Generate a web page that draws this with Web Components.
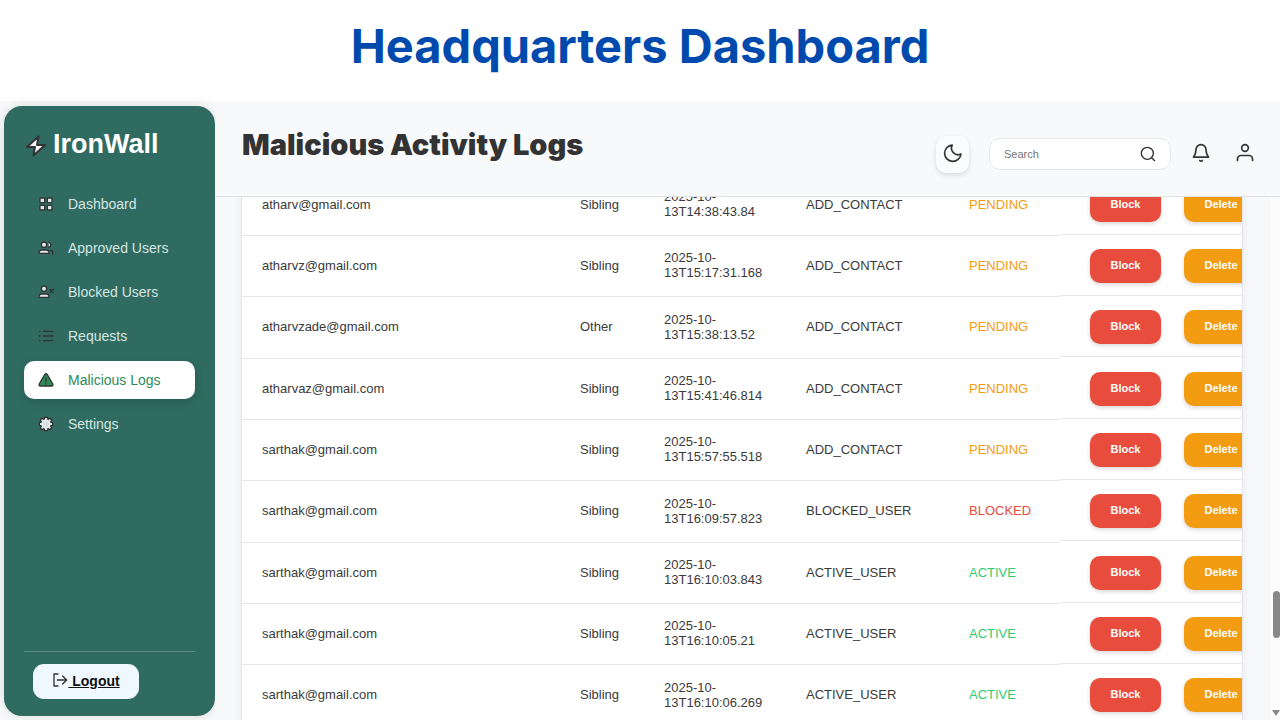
<!DOCTYPE html>
<html lang="en">
<head>
<meta charset="utf-8">
<meta name="viewport" content="width=device-width, initial-scale=1">
<title>Headquarters Dashboard</title>
<style>
  html, body { height: 100%; margin: 0; }
  body { font: 13px/15px "Liberation Sans", Arial, sans-serif; color: #3a3a3a; background: #fff; }
</style>
</head>
<body>
<hq-page></hq-page>
<script>
const define = (name, html, setup) => customElements.define(name, class extends HTMLElement {
  constructor() {
    super();
    this.attachShadow({ mode: 'open' }).innerHTML = html;
  }
  connectedCallback() { if (setup) setup.call(this, this.shadowRoot); }
});

const ICONS = {
  bolt: '<path d="M14.500 2.500 3 13h8l-1.500 8.500L21 11h-8z"/>',
  grid: '<path d="M3 3h7v7H3zM14 3h7v7h-7zM3 14h7v7H3zM14 14h7v7h-7z"/>',
  users: '<path d="M1.500 20v-1a4 4 0 0 1 4-4h7a4 4 0 0 1 4 4v1z"/><circle cx="9" cy="7" r="4"/><path d="M16 3.100a4 4 0 0 1 0 7.800"/><path d="M19 15.200a4 4 0 0 1 3 3.800v2" fill="none"/>',
  blocked: '<path d="M1.500 20v-1a4 4 0 0 1 4-4h7a4 4 0 0 1 4 4v1z"/><circle cx="9" cy="7" r="4"/><path d="m18 8 5 5m0-5-5 5"/>',
  list: '<path d="M8 5h14M8 12h14M8 19h14M2 5h1M2 12h1M2 19h1"/>',
  alert: '<path d="M10.300 3.500 1.800 18a2 2 0 0 0 1.700 3h17a2 2 0 0 0 1.700-3L13.700 3.500a2 2 0 0 0-3.400 0z"/><path d="M12 9v5M12 17v1"/>',
  gear: '<path d="m10 2h4l1 3 3-1.500 2.500 2.500-1.500 3 3 1v4l-3 1 1.500 3-2.500 2.500-3-1.500-1 3h-4l-1-3-3 1.500-2.500-2.500 1.500-3-3-1v-4l3-1-1.500-3 2.500-2.500 3 1.500z"/><circle cx="12" cy="12" r="3" stroke-width="1" stroke="#c8d5d2"/>',
  moon: '<path d="M11 2.500a8 8 0 0 0 10.500 10.800A9.800 9.800 0 1 1 11 2.500z"/>',
  search: '<circle cx="11" cy="11" r="9"/><path d="m22 22-4.500-4.500"/>',
  bell: '<path d="M6 8a6 6 0 0 1 12 0c0 5 1.500 7 3 9H3c1.500-2 3-4 3-9z"/><path d="M10.500 21a2 2 0 0 0 3 0"/>',
  person: '<circle cx="12" cy="6" r="4"/><path d="M3 21v-2a4 4 0 0 1 4-4h10a4 4 0 0 1 4 4v2"/>',
  exit: '<path d="M9 3H3v18h6M8 12h14M16 6l6 6-6 6"/>'
};

define('hq-icon', `
  <style>
    :host { display: block; flex: none; width: 16px; height: 16px; }
    svg { display: block; width: 100%; height: 100%; fill: var(--icon-fill, none);
          stroke: var(--icon-stroke, #333); stroke-width: var(--icon-weight, 2); stroke-linecap: round; stroke-linejoin: round; }
  </style>
  <svg viewBox="0 0 24 24" aria-hidden="true"></svg>`,
  function (root) { root.querySelector('svg').innerHTML = ICONS[this.getAttribute('name')]; });

define('nav-item', `
  <style>
    :host { display: block; }
    a { display: flex; align-items: center; gap: 14px; height: 38px; padding: 0 14px; border-radius: 10px;
        color: #d5e5e1; text-decoration: none; font-size: 14px; --icon-fill: #dfeae8; }
    :host([active]) a { background: #fff; color: #2e8b57; box-shadow: 0 3px 8px rgba(0,0,0,.15); --icon-fill: #2e8b57; }
  </style>
  <a href="#"><hq-icon></hq-icon><slot></slot></a>`,
  function (root) {
    const icon = document.createElement('hq-icon');
    icon.setAttribute('name', this.getAttribute('icon'));
    root.querySelector('hq-icon').replaceWith(icon);
  });

define('side-bar', `
  <style>
    :host { display: flex; flex-direction: column; box-sizing: border-box; padding: 20px 20px 17px; border-radius: 18px;
            background: #2f6b61; box-shadow: 0 0 12px rgba(0,0,0,.12); }
    .brand { display: flex; align-items: center; gap: 5px; height: 36px; color: #fff;
             font-size: 27px; font-weight: bold; line-height: 36px; }
    .brand hq-icon { width: 24px; height: 24px; margin-top: 4px; --icon-fill: #fff; }
    nav { display: flex; flex-direction: column; gap: 6px; margin-top: 23px; }
    footer { margin-top: auto; padding: 12px 9px 0; border-top: 1px solid #5b8b83; }
    .logout { display: flex; align-items: center; justify-content: center; box-sizing: border-box; width: 106px; height: 35px;
              border-radius: 11px; background: #f0f8ff; color: #111; font-weight: bold; font-size: 14px; text-decoration: none; }
    .logout span { text-decoration: underline; white-space: pre; }
    .logout hq-icon { margin-bottom: 4px; }
  </style>
  <div class="brand"><hq-icon name="bolt"></hq-icon>IronWall</div>
  <nav><slot></slot></nav>
  <footer><a class="logout" href="#"><hq-icon name="exit"></hq-icon><span> Logout</span></a></footer>`);

define('top-bar', `
  <style>
    :host { display: flex; justify-content: space-between; box-sizing: border-box; height: 96px; padding: 0 25px 0 27px;
            border-bottom: 1px solid #e0e3e6; background: #f8f9fb; }
    h2 { margin: 28px 0 0; color: #333; font: 900 29px/32px Inter, sans-serif; white-space: nowrap; }
    .tools { display: flex; align-items: center; margin-top: 11px; }
    button { display: grid; place-items: center; padding: 0; border: 0; background: none; }
    button hq-icon { width: 20px; height: 20px; }
    .theme { width: 33px; height: 37px; margin-right: 20px; border-radius: 10px; background: #fafbfc; box-shadow: 0 2px 5px rgba(0,0,0,.13); }
    .search { display: flex; align-items: center; box-sizing: border-box; width: 182px; height: 32px; margin-right: 20px; padding: 0 14px;
              border: 1px solid #e5e7ea; border-radius: 11px; background: #fff; }
    input { flex: 1; min-width: 0; padding: 0; border: 0; outline: 0; background: none; font: 11px/15px "Liberation Sans", Arial, sans-serif; }
    input::placeholder { color: #757575; }
    .bell { margin-right: 24px; }
    .search hq-icon { width: 16px; height: 16px; }
    .theme, .bell, .account { padding-bottom: 2px; }
  </style>
  <h2><slot></slot></h2>
  <div class="tools">
    <button class="theme" aria-label="Dark mode"><hq-icon name="moon"></hq-icon></button>
    <div class="search"><input type="text" placeholder="Search" aria-label="Search"><button aria-label="Submit search"><hq-icon name="search"></hq-icon></button></div>
    <button class="bell" aria-label="Notifications"><hq-icon name="bell"></hq-icon></button>
    <button class="account" aria-label="Account"><hq-icon name="person"></hq-icon></button>
  </div>`);

const LOGS = [
  ['atharv@gmail.com', 'Sibling', '2025-10-13T14:38:43.84', 'ADD_CONTACT', 'PENDING'],
  ['atharvz@gmail.com', 'Sibling', '2025-10-13T15:17:31.168', 'ADD_CONTACT', 'PENDING'],
  ['atharvzade@gmail.com', 'Other', '2025-10-13T15:38:13.52', 'ADD_CONTACT', 'PENDING'],
  ['atharvaz@gmail.com', 'Sibling', '2025-10-13T15:41:46.814', 'ADD_CONTACT', 'PENDING'],
  ['sarthak@gmail.com', 'Sibling', '2025-10-13T15:57:55.518', 'ADD_CONTACT', 'PENDING'],
  ['sarthak@gmail.com', 'Sibling', '2025-10-13T16:09:57.823', 'BLOCKED_USER', 'BLOCKED'],
  ['sarthak@gmail.com', 'Sibling', '2025-10-13T16:10:03.843', 'ACTIVE_USER', 'ACTIVE'],
  ['sarthak@gmail.com', 'Sibling', '2025-10-13T16:10:05.21', 'ACTIVE_USER', 'ACTIVE'],
  ['sarthak@gmail.com', 'Sibling', '2025-10-13T16:10:06.269', 'ACTIVE_USER', 'ACTIVE']
];

define('log-table', `
  <style>
    :host { display: block; overflow: hidden; border: 1px solid #e3e5e8; background: #fff; box-shadow: 0 2px 8px rgba(0,0,0,.06); }
    table { width: calc(100% + 43px); border-collapse: separate; border-spacing: 0; table-layout: fixed; }
    .relation { width: 84px; } .time { width: 142px; } .action { width: 163px; } .status { width: 111px; } .buttons { width: 225px; }
    td { box-sizing: border-box; height: 61px; padding: 0 18px 2px 20px; border-bottom: 1px solid #e8e8e8; }
    tr:nth-child(3n) td { height: 62px; }
    td.controls { padding: 0; border: 0; vertical-align: top; }
    .controls div { display: flex; align-items: center; gap: 23px; box-sizing: border-box; height: 60px; padding-left: 30px; border-bottom: 1px solid #e8e8e8; }
    .PENDING { color: #f39c12; } .BLOCKED { color: #e74c3c; } .ACTIVE { color: #2ecc71; }
    button { width: 71px; height: 34px; padding: 0; border: 0; border-radius: 10px; color: #fff; background: #e74c3c;
             font: bold 11px/15px "Liberation Sans", Arial, sans-serif; box-shadow: 0 2px 4px rgba(0,0,0,.15); }
    button + button { width: 74px; background: #f39c12; }
  </style>
  <table>
    <colgroup><col><col class="relation"><col class="time"><col class="action"><col class="status"><col class="buttons"></colgroup>
    <tbody></tbody>
  </table>`,
  function (root) {
    root.querySelector('tbody').innerHTML = LOGS.map(([email, relation, time, action, status]) => `
      <tr><td>${email}</td><td>${relation}</td><td>${time}</td><td>${action}</td><td class="${status}">${status}</td>
      <td class="controls"><div><button>Block</button><button>Delete</button></div></td></tr>`).join('');
  });

define('scroll-strip', `
  <style>
    :host { display: flex; flex-direction: column; align-items: flex-end; justify-content: flex-end; background: #fcfcfc; }
    .thumb { width: 7px; height: 47px; margin-bottom: 72px; border-radius: 4px; background: #888; }
    .arrow { width: 8px; height: 6px; margin-bottom: 4px; background: #888; clip-path: polygon(0 0, 100% 0, 50% 100%); }
  </style>
  <div class="thumb"></div><div class="arrow"></div>`);

define('hq-page', `
  <style>
    :host { display: grid; grid-template-rows: 101px minmax(0, 1fr); height: 100vh; overflow: hidden; }
    h1 { margin: 0; padding-top: 16px; color: #004aad; text-align: center; font: 700 47px/60px Inter, sans-serif; }
    .app { display: grid; grid-template-columns: 215px minmax(0, 1fr); min-height: 0; background: #f8f9fb; }
    side-bar { margin: 5px 0 4px 4px; }
    main { display: grid; grid-template-rows: auto minmax(0, 1fr); min-width: 0; min-height: 0; }
    .content { display: grid; grid-template-columns: minmax(0, 1fr) 10px; gap: 27px; overflow: hidden; padding-left: 26px; background: #f6f8fa; }
    /* The list is scrolled, so its first row is partly under the top bar. */
    log-table { align-self: start; margin-top: -23px; }
  </style>
  <h1>Headquarters Dashboard</h1>
  <div class="app">
    <side-bar>
      <nav-item icon="grid">Dashboard</nav-item>
      <nav-item icon="users">Approved Users</nav-item>
      <nav-item icon="blocked">Blocked Users</nav-item>
      <nav-item icon="list">Requests</nav-item>
      <nav-item icon="alert" active>Malicious Logs</nav-item>
      <nav-item icon="gear">Settings</nav-item>
    </side-bar>
    <main>
      <top-bar>Malicious Activity Logs</top-bar>
      <div class="content"><log-table></log-table><scroll-strip></scroll-strip></div>
    </main>
  </div>`);
</script>
</body>
</html>
